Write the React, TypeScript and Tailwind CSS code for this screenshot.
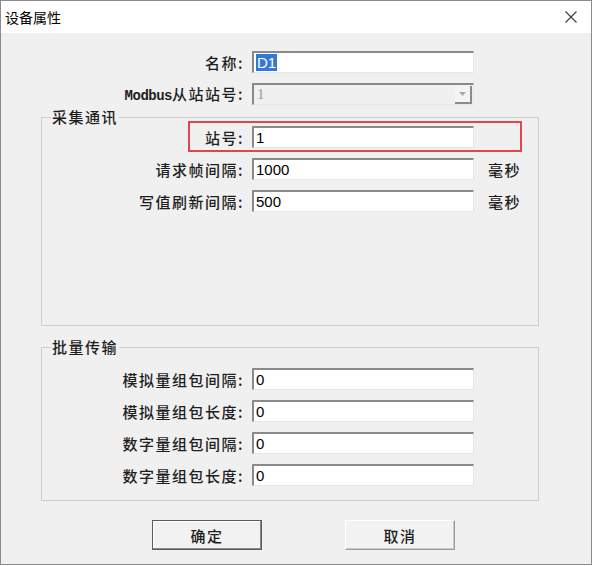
import React from "react";

const LABEL_FONT = "font-['Noto_Sans_CJK_SC',sans-serif]";

function TextBox({ value, selected }: { value: string; selected?: boolean }) {
  return (
    <div className="flex h-[22px] w-[222px] items-center border-t-2 border-l-2 border-r border-b border-t-[#8a8a8a] border-l-[#8a8a8a] border-r-[#e6e6e6] border-b-[#e6e6e6] bg-white pl-[2px] font-['Liberation_Sans',sans-serif] text-[15px] leading-none text-black">
      {selected ? (
        <span className="bg-[#3478d6] px-[1px] py-[1px] text-white">{value}</span>
      ) : (
        <span>{value}</span>
      )}
    </div>
  );
}

function ComboBox({ value }: { value: string }) {
  return (
    <div className="flex h-[22px] w-[222px] items-center border-t-2 border-l-2 border-r border-b border-t-[#8a8a8a] border-l-[#8a8a8a] border-r-[#e6e6e6] border-b-[#e6e6e6] bg-[#f0f0f0] pl-[3px] font-['Liberation_Serif',serif] text-[15px] leading-none text-[#9a9a9a]">
      <span className="flex-1">{value}</span>
      <div className="mr-[1px] flex h-[18px] w-[17px] items-center justify-center border-r-2 border-b-2 border-r-[#8a8a8a] border-b-[#8a8a8a] bg-[#f4f4f4]">
        <svg width="7" height="4" viewBox="0 0 7 4">
          <path d="M0 0h7L3.5 4z" fill="#a8a8a8" />
        </svg>
      </div>
    </div>
  );
}

function Row({
  label,
  labelWidth,
  children,
  suffix,
}: {
  label: React.ReactNode;
  labelWidth: string;
  children: React.ReactNode;
  suffix?: string;
}) {
  return (
    <div className="flex h-[22px] items-center">
      <div className={`${labelWidth} text-right text-[15px] font-medium leading-none tracking-[1.5px] text-[#1e1e1e]`}>
        {label}
      </div>
      <div className="ml-2">{children}</div>
      {suffix && (
        <div className="ml-[14px] text-[15px] font-medium leading-none tracking-[1.5px] text-[#1e1e1e]">
          {suffix}
        </div>
      )}
    </div>
  );
}

function Group({
  title,
  className,
  children,
}: {
  title: string;
  className: string;
  children: React.ReactNode;
}) {
  return (
    <fieldset className={`relative ml-[40px] w-[498px] border border-[#cdcdcd] ${className}`}>
      <legend className="ml-[9px] px-[1px] text-[15px] font-medium leading-[16px] tracking-[1.5px] text-[#1e1e1e]">
        {title}
      </legend>
      {children}
    </fieldset>
  );
}

function DialogButton({ label, isDefault }: { label: string; isDefault?: boolean }) {
  return (
    <button
      className={`h-[30px] w-[110px] bg-[#f2f2f2] text-[15px] font-medium leading-none tracking-[1.5px] text-[#1e1e1e] ${
        isDefault
          ? "border border-[#5a5a5a] shadow-[inset_-1px_-1px_0_#8a8a8a,inset_1px_1px_0_#ffffff]"
          : "border border-t-white border-l-white border-r-[#9a9a9a] border-b-[#9a9a9a] shadow-[inset_-1px_-1px_0_#c8c8c8]"
      }`}
    >
      {label}
    </button>
  );
}

export default function App() {
  return (
    <div className={`h-[566px] w-[594px] bg-white ${LABEL_FONT}`}>
      <div className="flex h-[565px] w-[592px] flex-col border border-[#8c8c8c] bg-[#f0f0f0]">
        <div className="flex h-[32px] shrink-0 items-center justify-between bg-white pl-[4px] pr-[14px]">
          <span className="text-[14px] leading-none text-black">设备属性</span>
          <svg width="12" height="12" viewBox="0 0 12 12">
            <path d="M0.5 0.5L11.5 11.5M11.5 0.5L0.5 11.5" stroke="#3a3a3a" strokeWidth="1.1" />
          </svg>
        </div>

        <div className="flex flex-col pt-[18px]">
          <div className="flex flex-col gap-[10px]">
            <Row label="名称:" labelWidth="w-[243px]">
              <TextBox value="D1" selected />
            </Row>
            <Row
              label={
                <>
                  <span className="font-['Liberation_Mono',monospace] text-[14px] font-bold tracking-[-0.5px]">
                    Modbus
                  </span>
                  从站站号:
                </>
              }
              labelWidth="w-[243px]"
            >
              <ComboBox value="1" />
            </Row>
          </div>

          <Group title="采集通讯" className="mt-[4px] h-[217px]">
            <div className="pointer-events-none absolute left-[146px] top-[-4px] h-[31px] w-[334px] border-2 border-[#e0474c]" />
            <div className="flex flex-col gap-[10px] pt-[1px]">
              <Row label="站号:" labelWidth="w-[202px]">
                <TextBox value="1" />
              </Row>
              <Row label="请求帧间隔:" labelWidth="w-[202px]" suffix="毫秒">
                <TextBox value="1000" />
              </Row>
              <Row label="写值刷新间隔:" labelWidth="w-[202px]" suffix="毫秒">
                <TextBox value="500" />
              </Row>
            </div>
          </Group>

          <Group title="批量传输" className="mt-[13px] h-[162px]">
            <div className="flex flex-col gap-[10px] pt-[13px]">
              <Row label="模拟量组包间隔:" labelWidth="w-[202px]">
                <TextBox value="0" />
              </Row>
              <Row label="模拟量组包长度:" labelWidth="w-[202px]">
                <TextBox value="0" />
              </Row>
              <Row label="数字量组包间隔:" labelWidth="w-[202px]">
                <TextBox value="0" />
              </Row>
              <Row label="数字量组包长度:" labelWidth="w-[202px]">
                <TextBox value="0" />
              </Row>
            </div>
          </Group>

          <div className="ml-[151px] mt-[19px] flex gap-[83px]">
            <DialogButton label="确定" isDefault />
            <DialogButton label="取消" />
          </div>
        </div>
      </div>
    </div>
  );
}
